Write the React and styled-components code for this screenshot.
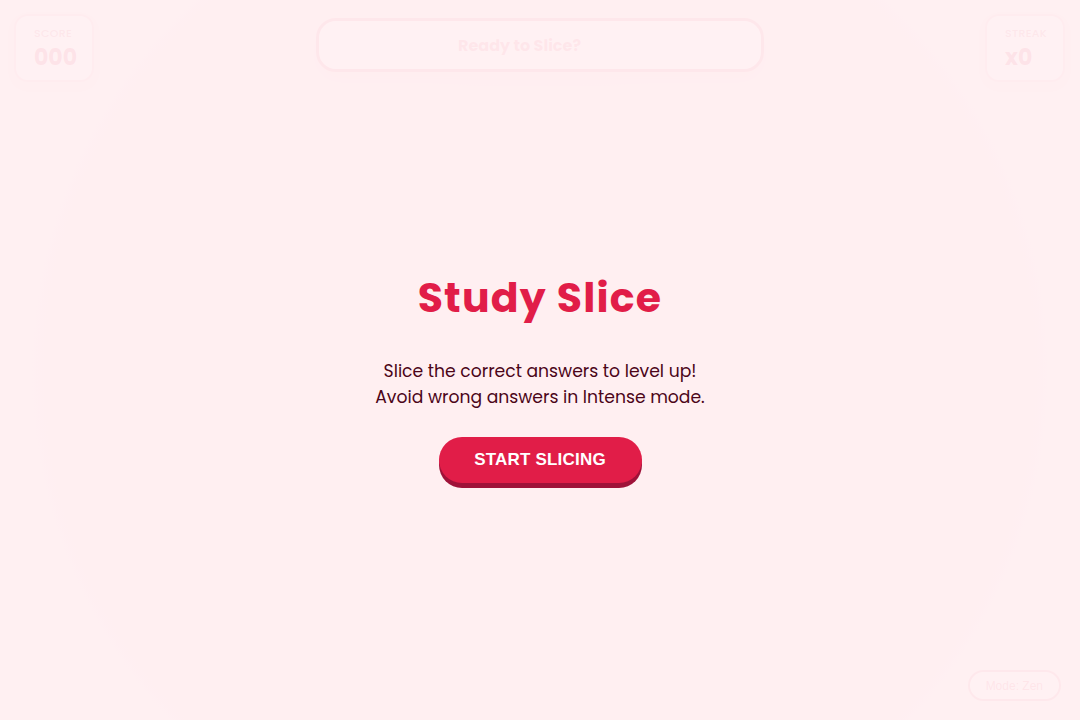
import React from "react";
import styled, { createGlobalStyle } from "styled-components";

const Global = createGlobalStyle`
  html, body { margin: 0; padding: 0; }
  body {
    background: #fff1f1;
    font-family: "Poppins", "Inter", "Noto Sans", sans-serif;
  }
  * { box-sizing: border-box; }
`;

const Stage = styled.div`
  position: relative;
  width: 100vw;
  height: 100vh;
  overflow: hidden;
  background:
    radial-gradient(circle at 540px 372px,
      #fdecee 0px, #fdecee 290px, #feeeef 312px, #feeeef 495px, #fff1f1 515px, #fff1f1 100%);
`;

const Hud = styled.header`
  display: flex;
  justify-content: space-between;
  align-items: flex-start;
  padding: 14px 15px 0 14px;
`;

const StatCard = styled.div`
  width: 80px;
  height: 68px;
  border-radius: 14px;
  background: #ffffff;
  border: 2px solid #fbd6dd;
  box-shadow: 0 4px 12px rgba(225, 29, 72, 0.06);
  padding: 9px 0 0 18px;
  display: flex;
  flex-direction: column;
`;

const StatLabel = styled.span`
  font-family: "Poppins", "Inter", sans-serif;
  font-size: 11px;
  line-height: 17px;
  font-weight: 500;
  letter-spacing: 0.3px;
  color: #eaa9b7;
`;

const StatValue = styled.span`
  font-family: "Poppins", "Inter", sans-serif;
  font-size: 22px;
  line-height: 32px;
  font-weight: 700;
  color: #ee8ba1;
`;

const QuestionPill = styled.div`
  margin-top: 4px;
  width: 448px;
  height: 54px;
  border-radius: 20px;
  border: 3px solid #f7aebd;
  background: #ffffff;
  box-shadow: 0 8px 20px rgba(225, 29, 72, 0.07);
  display: flex;
  align-items: center;
  justify-content: center;
  padding-right: 40px;
  font-size: 16px;
  font-weight: 700;
  color: #f3a5b6;
`;

const ModeBadge = styled.div`
  position: absolute;
  right: 19px;
  bottom: 19px;
  height: 31px;
  padding: 0 16px;
  border-radius: 16px;
  border: 2px solid #f7b4c2;
  background: #ffffff;
  display: flex;
  align-items: center;
  font-family: "Liberation Sans", Arial, sans-serif;
  font-size: 12px;
  color: #f09aad;
`;

const Overlay = styled.div`
  position: absolute;
  inset: 0;
  background: rgba(255, 239, 241, 0.88);
  display: flex;
  flex-direction: column;
  align-items: center;
  justify-content: center;
  padding-top: 34px;
`;

const Title = styled.h1`
  margin: 0 0 30px;
  font-size: 41px;
  font-weight: 700;
  letter-spacing: 1.2px;
  color: #e11d48;
`;

const Lead = styled.p`
  margin: 0 0 27px;
  font-size: 17.2px;
  line-height: 26px;
  text-align: center;
  color: #4c0519;
`;

const StartButton = styled.button`
  width: 203px;
  height: 46px;
  border: none;
  border-radius: 23px;
  background: #e11d48;
  box-shadow: 0 5px 0 #9f1239;
  color: #ffffff;
  font-family: "Liberation Sans", Arial, sans-serif;
  font-size: 17px;
  font-weight: 700;
  letter-spacing: 0.2px;
  cursor: pointer;
  margin-bottom: 5px;
`;

export default function App() {
  return (
    <>
      <Global />
      <Stage>
        <Hud>
          <StatCard>
            <StatLabel>SCORE</StatLabel>
            <StatValue>000</StatValue>
          </StatCard>
          <QuestionPill>Ready to Slice?</QuestionPill>
          <StatCard>
            <StatLabel>STREAK</StatLabel>
            <StatValue>x0</StatValue>
          </StatCard>
        </Hud>
        <ModeBadge>Mode: Zen</ModeBadge>
        <Overlay>
          <Title>Study Slice</Title>
          <Lead>
            Slice the correct answers to level up!
            <br />
            Avoid wrong answers in Intense mode.
          </Lead>
          <StartButton>START SLICING</StartButton>
        </Overlay>
      </Stage>
    </>
  );
}
